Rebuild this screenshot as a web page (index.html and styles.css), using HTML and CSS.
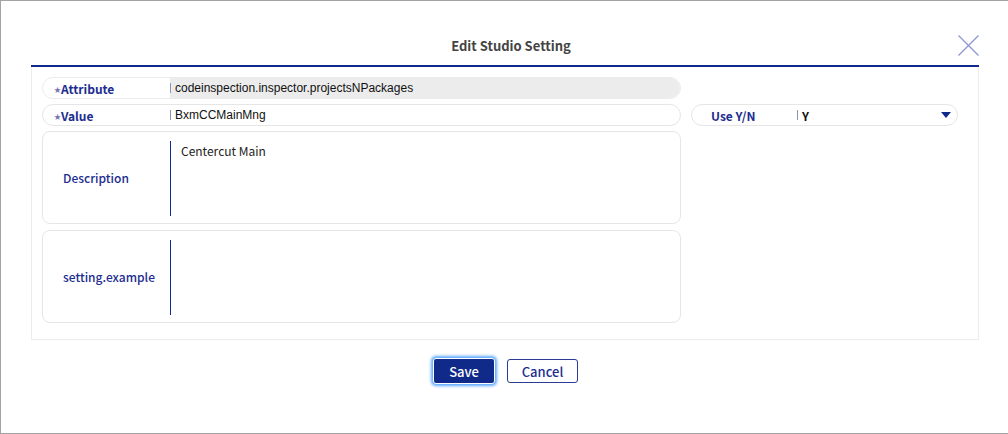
FILE: index.html
```html
<!DOCTYPE html>
<html>
<head>
  <meta charset="UTF-8">
  <title>Edit Studio Setting</title>
  <link rel="stylesheet" href="styles.css">
</head>
<body>
  <div class="dialog">
    <!-- Header -->
    <div class="dialog-header">
      <div></div>
      <div class="dialog-title">Edit Studio Setting</div>
      <button class="btn-close" title="Close">
        <svg width="21" height="21" viewBox="0 0 21 21">
          <path d="M0.5 0.5 L20.5 20.5 M20.5 0.5 L0.5 20.5" stroke="#8b96d4" stroke-width="1.3" fill="none"/>
        </svg>
      </button>
    </div>

    <!-- Form body -->
    <div class="dialog-body">
      <div class="form-grid">
        <div class="field field-readonly">
          <label class="field-label"><span class="req">&#9733;</span>Attribute</label>
          <div class="field-value">codeinspection.inspector.projectsNPackages</div>
        </div>
        <div></div>

        <div class="field">
          <label class="field-label"><span class="req">&#9733;</span>Value</label>
          <div class="field-value">BxmCCMainMng</div>
        </div>
        <div class="field field-select">
          <label class="field-label">Use Y/N</label>
          <div class="field-value">Y</div>
          <span class="caret"></span>
        </div>

        <div class="area">
          <label class="area-label">Description</label>
          <div class="area-value">Centercut Main</div>
        </div>
        <div></div>

        <div class="area area-last">
          <label class="area-label">setting.example</label>
          <div class="area-value"></div>
        </div>
        <div></div>
      </div>
    </div>

    <!-- Footer -->
    <div class="dialog-footer">
      <button class="btn btn-primary">Save</button>
      <button class="btn btn-default">Cancel</button>
    </div>
  </div>
</body>
</html>
```

FILE: styles.css
```css
/* Base */
* {
  margin: 0;
  padding: 0;
  box-sizing: border-box;
}

body {
  font-family: "Noto Sans CJK KR", "Noto Sans", sans-serif;
  background: #fff;
  overflow: hidden;
}

/* Dialog frame */
.dialog {
  height: 434px;
  border: 1px solid #a3a3a3;
  border-right: none;
  padding: 0 29px 0 30px;
}

.dialog-header {
  height: 66px;
  display: grid;
  grid-template-columns: 1fr auto 1fr;
  align-items: end;
  padding-bottom: 9px;
  border-bottom: 2px solid #0f2a8c;
}

.dialog-title {
  font-size: 13px;
  font-weight: 600;
  color: #444;
  line-height: 20px;
  padding-left: 12px;
}

.btn-close {
  justify-self: end;
  width: 21px;
  height: 21px;
  border: none;
  background: none;
  cursor: pointer;
}

.btn-close svg {
  display: block;
}

/* Body panel */
.dialog-body {
  height: 273px;
  border: 1px solid #ececec;
  border-top: none;
  padding: 10px 20px 0 10px;
}

.form-grid {
  display: grid;
  grid-template-columns: 639px 267px;
  column-gap: 10px;
  row-gap: 5px;
}

/* Single line fields */
.field {
  height: 22px;
  display: flex;
  align-items: center;
  border: 1px solid #e6e6e6;
  border-radius: 11px;
  overflow: hidden;
  position: relative;
}

.field-label {
  width: 127px;
  flex: none;
  padding-left: 11px;
  font-size: 12px;
  font-weight: 600;
  color: #1c2d8f;
  white-space: nowrap;
}

.req {
  font-size: 7px;
  color: #7474b4;
  vertical-align: 2px;
}

.field-value {
  flex: 1;
  height: 100%;
  display: flex;
  align-items: center;
  padding-left: 5px;
  font-family: "Liberation Sans", Arial, sans-serif;
  font-size: 12px;
  color: #111;
  position: relative;
}

.field-value::before {
  content: "";
  position: absolute;
  left: 0;
  top: 5px;
  width: 1px;
  height: 10px;
  background: #8a93b4;
}

.field-readonly {
  border-color: #ececec;
}

.field-readonly .field-value {
  background: #ececec;
}

.field-select .field-label {
  width: 105px;
  padding-left: 19px;
}

.field-select .field-value {
  font-family: "Noto Sans CJK KR", "Noto Sans", sans-serif;
  font-weight: 700;
  font-size: 12px;
}

.caret {
  position: absolute;
  right: 6px;
  top: 7px;
  width: 0;
  height: 0;
  border-left: 5px solid transparent;
  border-right: 5px solid transparent;
  border-top: 6px solid #0f2a8c;
}

/* Multi line areas */
.area {
  height: 93px;
  display: flex;
  border: 1px solid #e6e6e6;
  border-radius: 8px;
}

.area-last {
  margin-top: 1px;
}

.area-label {
  width: 127px;
  flex: none;
  display: flex;
  align-items: center;
  padding-left: 20px;
  font-size: 12px;
  font-weight: 500;
  color: #1c2d8f;
}

.area-value {
  flex: 1;
  margin: 9px 0 7px;
  border-left: 1px solid #0f2a8c;
  padding: 0 10px;
  font-size: 12px;
  color: #222;
  line-height: 20px;
}

/* Footer buttons */
.dialog-footer {
  display: flex;
  justify-content: center;
  align-items: center;
  gap: 12px;
  padding-top: 18px;
  padding-left: 1px;
}

.btn {
  height: 24px;
  border-radius: 3px;
  font-family: "Noto Sans CJK KR", "Noto Sans", sans-serif;
  font-size: 13px;
  font-weight: 500;
  cursor: pointer;
}

.btn-primary {
  width: 62px;
  height: 26px;
  background: #102a8a;
  color: #fff;
  border: 1px solid #fff;
  box-shadow: 0 0 3px 2px #5aa8ff;
}

.btn-default {
  width: 71px;
  background: #fff;
  color: #1c2d8f;
  border: 1px solid #2a3c96;
}
```
